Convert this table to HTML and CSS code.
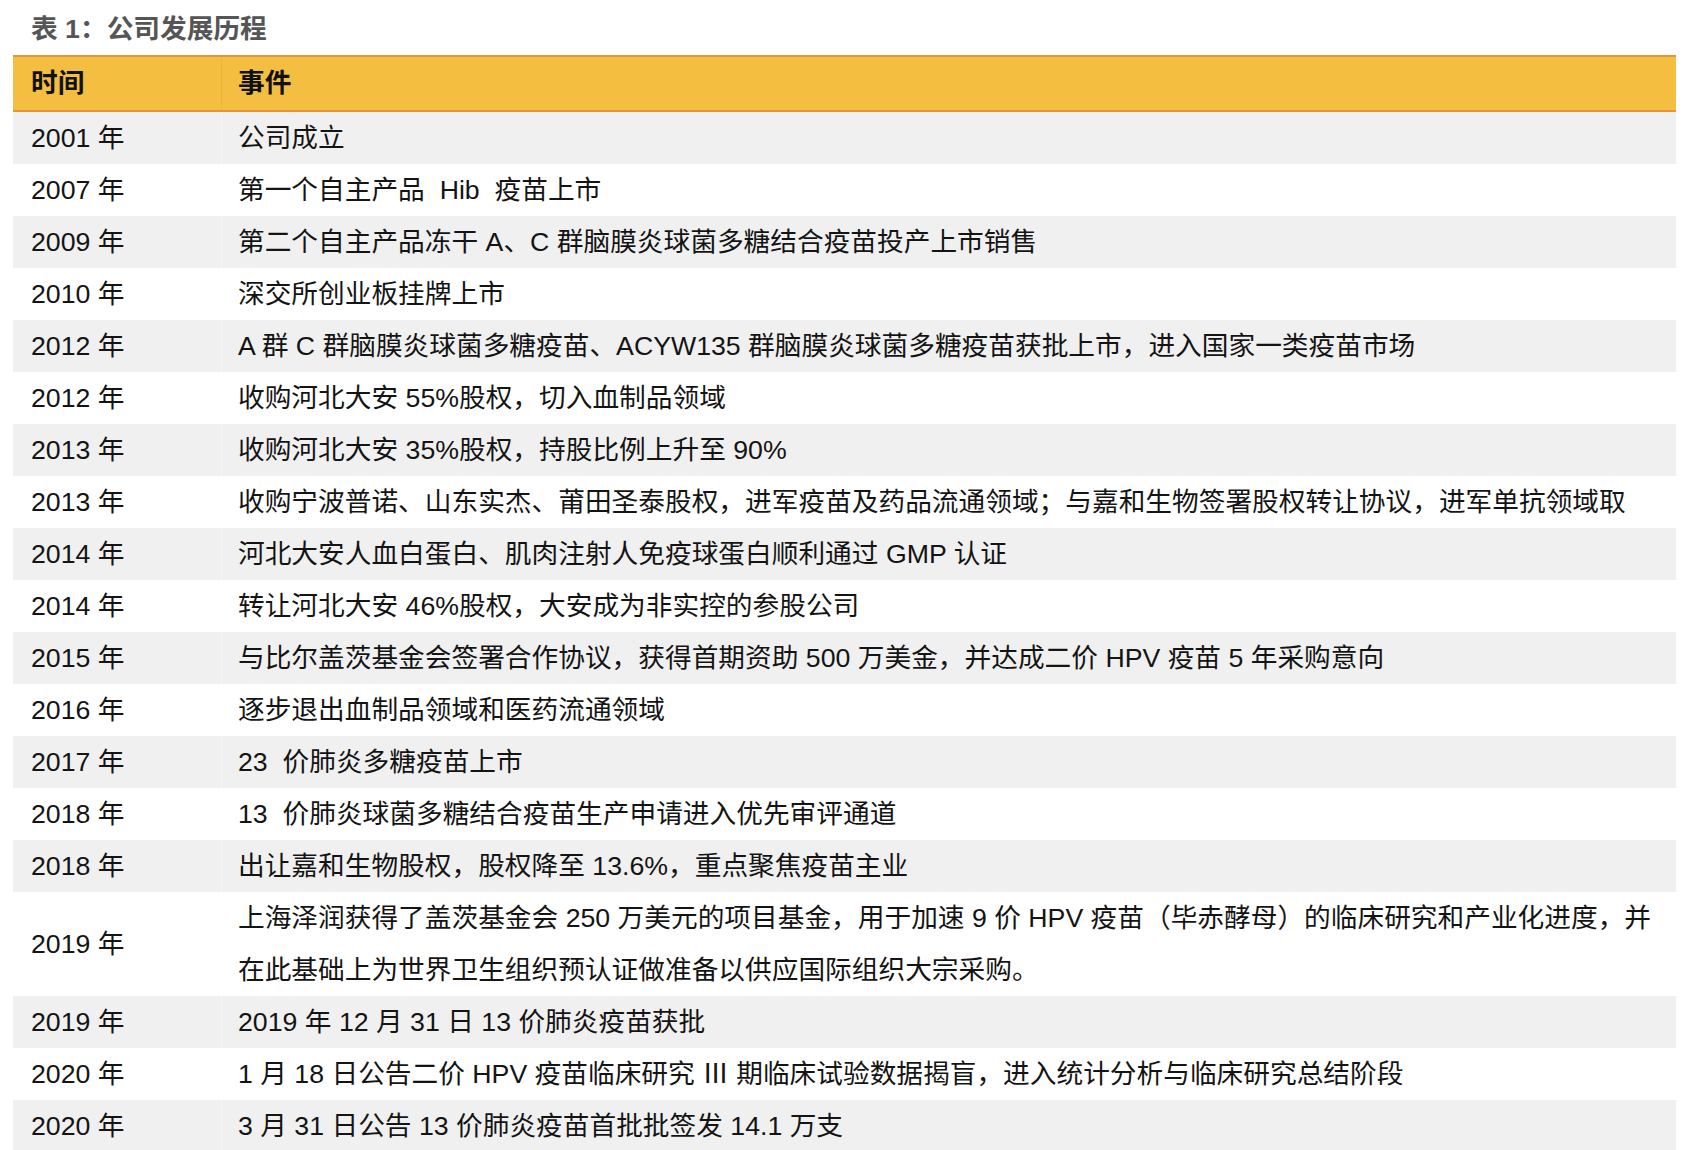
FILE: index.html
```html
<!DOCTYPE html>
<html lang="zh-CN">
<head>
<meta charset="utf-8">
<title>表 1：公司发展历程</title>
<link rel="stylesheet" href="styles.css">
</head>
<body>
<div class="page">
  <div class="caption">表 1：公司发展历程</div>
  <table class="history">
    <thead>
      <tr><th class="c-time">时间</th><th class="c-event">事件</th></tr>
    </thead>
    <tbody>
      <tr><td class="c-time">2001 年</td><td class="c-event">公司成立</td></tr>
      <tr><td class="c-time">2007 年</td><td class="c-event">第一个自主产品&nbsp; Hib&nbsp; 疫苗上市</td></tr>
      <tr><td class="c-time">2009 年</td><td class="c-event">第二个自主产品冻干 A、C 群脑膜炎球菌多糖结合疫苗投产上市销售</td></tr>
      <tr><td class="c-time">2010 年</td><td class="c-event">深交所创业板挂牌上市</td></tr>
      <tr><td class="c-time">2012 年</td><td class="c-event">A 群 C 群脑膜炎球菌多糖疫苗、ACYW135 群脑膜炎球菌多糖疫苗获批上市，进入国家一类疫苗市场</td></tr>
      <tr><td class="c-time">2012 年</td><td class="c-event">收购河北大安 55%股权，切入血制品领域</td></tr>
      <tr><td class="c-time">2013 年</td><td class="c-event">收购河北大安 35%股权，持股比例上升至 90%</td></tr>
      <tr><td class="c-time">2013 年</td><td class="c-event">收购宁波普诺、山东实杰、莆田圣泰股权，进军疫苗及药品流通领域；与嘉和生物签署股权转让协议，进军单抗领域取</td></tr>
      <tr><td class="c-time">2014 年</td><td class="c-event">河北大安人血白蛋白、肌肉注射人免疫球蛋白顺利通过 GMP 认证</td></tr>
      <tr><td class="c-time">2014 年</td><td class="c-event">转让河北大安 46%股权，大安成为非实控的参股公司</td></tr>
      <tr><td class="c-time">2015 年</td><td class="c-event">与比尔盖茨基金会签署合作协议，获得首期资助 500 万美金，并达成二价 HPV 疫苗 5 年采购意向</td></tr>
      <tr><td class="c-time">2016 年</td><td class="c-event">逐步退出血制品领域和医药流通领域</td></tr>
      <tr><td class="c-time">2017 年</td><td class="c-event">23&nbsp; 价肺炎多糖疫苗上市</td></tr>
      <tr><td class="c-time">2018 年</td><td class="c-event">13&nbsp; 价肺炎球菌多糖结合疫苗生产申请进入优先审评通道</td></tr>
      <tr><td class="c-time">2018 年</td><td class="c-event">出让嘉和生物股权，股权降至 13.6%，重点聚焦疫苗主业</td></tr>
      <tr><td class="c-time">2019 年</td><td class="c-event">上海泽润获得了盖茨基金会 250 万美元的项目基金，用于加速 9 价 HPV 疫苗（毕赤酵母）的临床研究和产业化进度，并<br>在此基础上为世界卫生组织预认证做准备以供应国际组织大宗采购。</td></tr>
      <tr><td class="c-time">2019 年</td><td class="c-event">2019 年 12 月 31 日 13 价肺炎疫苗获批</td></tr>
      <tr><td class="c-time">2020 年</td><td class="c-event">1 月 18 日公告二价 HPV 疫苗临床研究 Ⅲ 期临床试验数据揭盲，进入统计分析与临床研究总结阶段</td></tr>
      <tr><td class="c-time">2020 年</td><td class="c-event">3 月 31 日公告 13 价肺炎疫苗首批批签发 14.1 万支</td></tr>
    </tbody>
  </table>
</div>
</body>
</html>
```

FILE: styles.css
```css
html, body {
  margin: 0;
  padding: 0;
  background: #ffffff;
}

body {
  font-family: "Liberation Sans", "Noto Sans CJK SC", sans-serif;
  color: #141414;
  font-size: 26.7px;
}

.page {
  padding: 0 12px 0 13px;
  overflow: hidden;
  height: 1150px;
}

.caption {
  font-weight: bold;
  color: #555555;
  font-size: 26.7px;
  line-height: 36px;
  padding: 11px 0 8px 18px;
}

.history {
  width: 1663px;
  border-collapse: collapse;
  table-layout: fixed;
}

.history th,
.history td {
  text-align: left;
  padding: 0;
  font-weight: normal;
  vertical-align: middle;
}

.history th {
  background: #f4bf41;
  border-top: 2px solid #e8923b;
  border-bottom: 2px solid #e8923b;
  height: 53px;
  line-height: 53px;
  font-weight: bold;
  color: #111111;
}

.history td {
  line-height: 52px;
  height: 52px;
}

.history .c-time {
  width: 190px;
  padding-left: 18px;
}

.history .c-event {
  padding-left: 16px;
  padding-right: 2px;
}

.history th.c-event {
  border-left: 1px solid #eab33d;
}

.history tbody tr:nth-child(odd) td {
  background: #f0f0f0;
}

.history tbody tr:nth-child(odd) td.c-event {
  border-left: 1px solid #f6f6f6;
}

.history tbody tr:nth-child(even) td.c-event {
  border-left: 1px solid #ffffff;
}
```
